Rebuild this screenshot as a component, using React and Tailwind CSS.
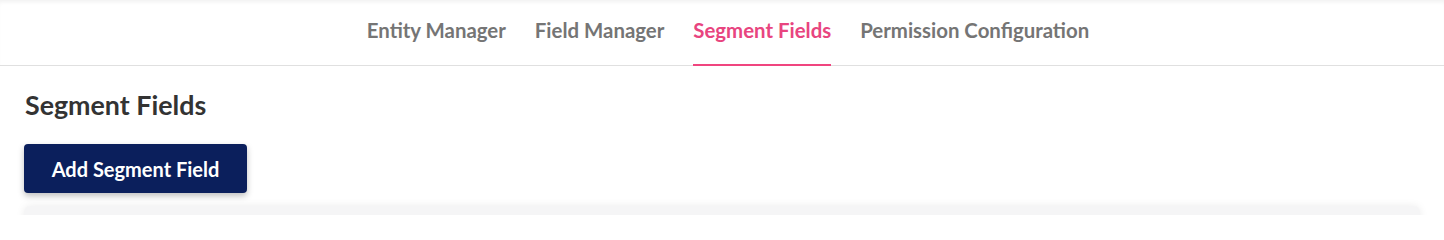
import React, { useState } from "react";

const tabs = [
  "Entity Manager",
  "Field Manager",
  "Segment Fields",
  "Permission Configuration",
];

function TabBar({ active, onChange }) {
  return (
    <div className="relative h-[66px] border-b border-[#e0e0e0] bg-white shadow-[inset_0_4px_4px_-2px_rgba(0,0,0,0.06)]">
      <div className="flex h-full items-stretch justify-center gap-[29px] pl-[12px]">
        {tabs.map((t) => (
          <button
            key={t}
            onClick={() => onChange(t)}
            className={
              "relative flex items-center pb-[5px] text-[20.4px] font-bold " +
              (active === t ? "text-[#e8457f]" : "text-[#757575]")
            }
          >
            {t}
            {active === t && (
              <span className="absolute bottom-[-1px] left-0 right-0 h-[2px] bg-[#f0457f]" />
            )}
          </button>
        ))}
      </div>
    </div>
  );
}

export default function App() {
  const [active, setActive] = useState("Segment Fields");

  return (
    <div
      className="h-[215px] overflow-hidden bg-white"
      style={{ fontFamily: "'Source Sans Pro', Lato, 'Noto Sans', sans-serif" }}
    >
      <TabBar active={active} onChange={setActive} />

      <div className="px-[24px] pt-[22px]">
        <h2 className="pl-[1px] text-[26.8px] font-bold leading-[34px] text-[#333333]">
          Segment Fields
        </h2>

        <button className="mt-[22px] h-[49px] w-[223px] rounded-[4px] bg-[#0b1f5c] text-[20px] font-bold text-white shadow-[0_3px_6px_rgba(0,0,0,0.25)]">
          Add Segment Field
        </button>

        <div className="mt-[13px] h-[40px] rounded-[6px] bg-[#f5f5f6] shadow-[0_0_8px_rgba(0,0,0,0.08)]" />
      </div>
    </div>
  );
}
